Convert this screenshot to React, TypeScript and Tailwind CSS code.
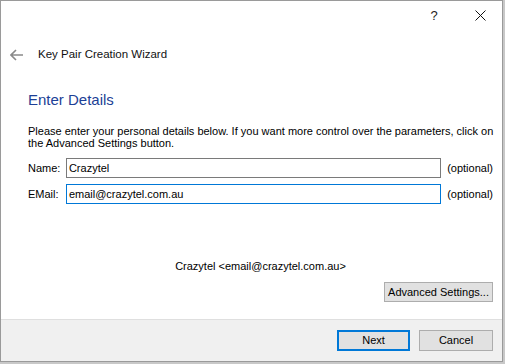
import React from "react";

const font = { fontFamily: '"Liberation Sans", Arial, sans-serif' };

export default function App() {
  return (
    <div className="w-[505px] h-[364px] bg-[#c8c8c8] overflow-hidden" style={font}>
      <div className="w-[503px] h-[362px] bg-white border border-[#9a9a9a] flex flex-col text-[11px] text-black">
        {/* title bar */}
        <div className="h-[29px] flex items-center justify-end">
          <div className="w-[46px] h-[29px] flex items-center justify-center text-[13px] text-[#222] pt-[1px]">?</div>
          <div className="w-[46px] h-[29px] flex items-center justify-center mr-[-1px]">
            <svg width="11" height="11" viewBox="0 0 11 11">
              <path d="M0.5 0.5 L10.5 10.5 M10.5 0.5 L0.5 10.5" stroke="#111" strokeWidth="1" />
            </svg>
          </div>
        </div>
        {/* header */}
        <div className="h-[50px] flex items-center pl-[9px] pb-[1px]">
          <svg width="14" height="12" viewBox="0 0 14 12">
            <path d="M1 6 H13 M6 1 L1 6 L6 11" stroke="#8a8a8a" strokeWidth="1.6" fill="none" />
          </svg>
          <span className="ml-[14px] text-[11.5px] text-[#111]">Key Pair Creation Wizard</span>
        </div>
        {/* content */}
        <div className="flex-1 flex flex-col pl-[27px] pr-[9px]">
          <div className="mt-[10px] text-[15px] leading-[20px] text-[#1d3f96]">Enter Details</div>
          <div className="mt-[15px] leading-[12px] whitespace-nowrap">
            Please enter your personal details below. If you want more control over the parameters, click on
            <br />
            the Advanced Settings button.
          </div>
          <div className="mt-[9px] flex items-center h-[20px]">
            <span className="w-[38px]">Name:</span>
            <div className="w-[376px] h-[20px] border border-[#7a7a7a] flex items-center pl-[2px]">Crazytel</div>
            <span className="ml-[6px]">(optional)</span>
          </div>
          <div className="mt-[6px] flex items-center h-[20px]">
            <span className="w-[38px]">EMail:</span>
            <div className="w-[376px] h-[20px] border border-[#0078d7] flex items-center pl-[2px]">email@crazytel.com.au</div>
            <span className="ml-[6px]">(optional)</span>
          </div>
          <div className="mt-[54px] h-[14px] flex justify-center">Crazytel &lt;email@crazytel.com.au&gt;</div>
          <div className="mt-[10px] flex justify-end">
            <div className="w-[109px] h-[20px] bg-[#e1e1e1] border border-[#adadad] flex items-center justify-center">
              Advanced Settings...
            </div>
          </div>
        </div>
        {/* footer */}
        <div className="h-[42px] border-t border-[#dfdfdf] bg-[#f0f0f0] flex items-center justify-end pr-[9px] gap-[9px]">
          <div className="w-[73px] h-[21px] bg-[#e1e1e1] border-2 border-[#0078d7] flex items-center justify-center">Next</div>
          <div className="w-[74px] h-[21px] bg-[#e1e1e1] border border-[#adadad] flex items-center justify-center">Cancel</div>
        </div>
      </div>
    </div>
  );
}
